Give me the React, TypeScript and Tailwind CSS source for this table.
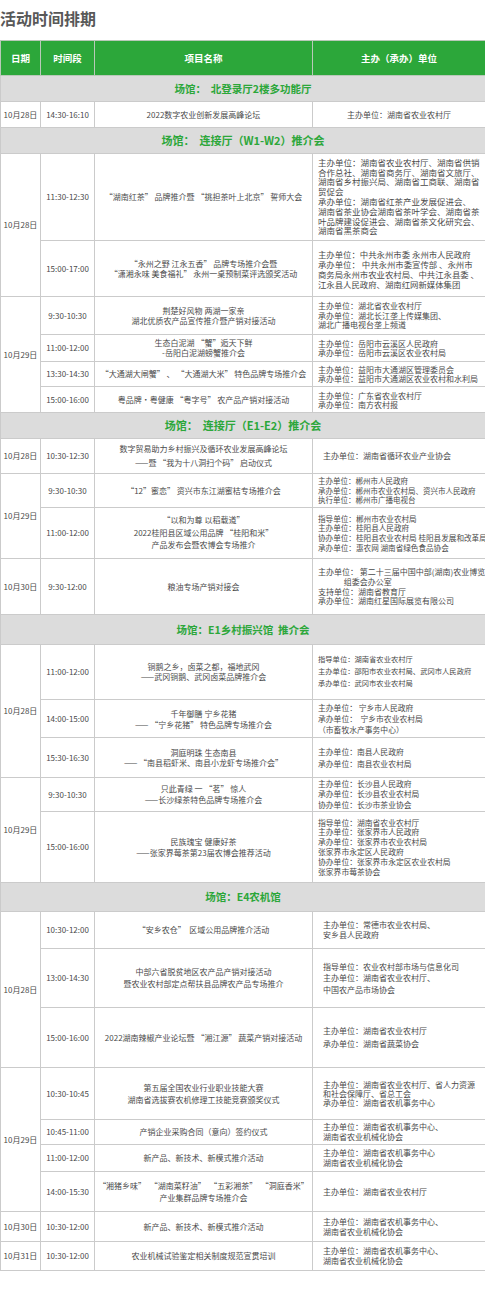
import React from "react";

type Row = {
  time: string;
  proj: string[];
  org: string[];
  h: string;
  pl?: string;
  ol?: string;
  of?: string;
  op?: string;
  center?: boolean;
};
type Group = { date: string; rows: Row[] };
type Section = { venue: string; vh: string; vf?: string; groups: Group[] };

const SECTIONS: Section[] = [
  {
    venue: "场馆：  北登录厅2楼多功能厅",
    vh: "h-[26px]",
    groups: [
      {
        date: "10月28日",
        rows: [
          {
            time: "14:30-16:10",
            proj: ["2022数字农业创新发展高峰论坛"],
            org: ["主办单位：湖南省农业农村厅"],
            h: "h-[26px]",
            center: true,
          },
        ],
      },
    ],
  },
  {
    venue: "场馆：  连接厅（W1-W2）推介会",
    vh: "h-[26px]",
    vf: "text-[11px]",
    groups: [
      {
        date: "10月28日",
        rows: [
          {
            time: "11:30-12:30",
            proj: ["“湖南红茶” 品牌推介暨 “挑担茶叶上北京” 誓师大会"],
            org: [
              "主办单位：湖南省农业农村厅、湖南省供销",
              "合作总社、湖南省商务厅、湖南省文旅厅、",
              "湖南省乡村振兴局、湖南省工商联、湖南省",
              "贸促会",
              "承办单位：湖南省红茶产业发展促进会、",
              "湖南省茶业协会湖南省茶叶学会、湖南省茶",
              "叶品牌建设促进会、湖南省茶文化研究会、",
              "湖南省黑茶商会",
            ],
            h: "h-[87px]",
            of: "text-[8.5px]",
            ol: "leading-[9.8px]",
          },
          {
            time: "15:00-17:00",
            proj: [
              "“永州之野 江永五香” 品牌专场推介会暨",
              "“潇湘永味 美食福礼” 永州一桌预制菜评选颁奖活动",
            ],
            org: [
              "主办单位：中共永州市委 永州市人民政府",
              "承办单位： 中共永州市委宣传部 、永州市",
              "商务局永州市农业农村局、中共江永县委 、",
              "江永县人民政府、湖南红网新媒体集团",
            ],
            h: "h-[56px]",
            of: "text-[8.4px]",
          },
        ],
      },
      {
        date: "10月29日",
        rows: [
          {
            time: "9:30-10:30",
            proj: ["荆楚好风物 两湖一家亲", "湖北优质农产品宣传推介暨产销对接活动"],
            org: [
              "主办单位：湖北省农业农村厅",
              "承办单位：湖北长江垄上传媒集团、",
              "湖北广播电视台垄上频道",
            ],
            h: "h-[38px]",
            ol: "leading-[9.5px]",
          },
          {
            time: "11:00-12:00",
            proj: ["生态白泥湖 “蟹”逅天下鲜", "-岳阳白泥湖螃蟹推介会"],
            org: ["主办单位：岳阳市云溪区人民政府", "承办单位：岳阳市云溪区农业农村局"],
            h: "h-[27px]",
            ol: "leading-[9px]",
          },
          {
            time: "13:30-14:30",
            proj: ["“大通湖大闸蟹” 、 “大通湖大米” 特色品牌专场推介会"],
            org: [
              "主办单位：益阳市大通湖区管理委员会",
              "承办单位：益阳市大通湖区农业农村和水利局",
            ],
            h: "h-[25px]",
            ol: "leading-[9px]",
          },
          {
            time: "15:00-16:00",
            proj: ["粤品牌·粤健康 “粤字号” 农产品产销对接活动"],
            org: ["主办单位：广东省农业农村厅", "承办单位：南方农村报"],
            h: "h-[26px]",
            ol: "leading-[9px]",
          },
        ],
      },
    ],
  },
  {
    venue: "场馆：  连接厅（E1-E2）推介会",
    vh: "h-[26px]",
    vf: "text-[11px]",
    groups: [
      {
        date: "10月28日",
        rows: [
          {
            time: "10:30-12:30",
            proj: [
              "数字贸易助力乡村振兴及循环农业发展高峰论坛",
              "——暨 “我为十八洞扫个码” 启动仪式",
            ],
            org: ["主办单位：湖南省循环农业产业协会"],
            h: "h-[35px]",
            pl: "leading-[14px]",
            op: "pl-[10px]",
          },
        ],
      },
      {
        date: "10月29日",
        rows: [
          {
            time: "9:30-10:30",
            proj: ["“12”蜜恋” 资兴市东江湖蜜桔专场推介会"],
            org: [
              "主办单位：郴州市人民政府",
              "承办单位：郴州市农业农村局、资兴市人民政府",
              "执行单位：郴州市广播电视台",
            ],
            h: "h-[34px]",
            of: "text-[7.5px]",
            ol: "leading-[9.5px]",
          },
          {
            time: "11:00-12:00",
            proj: [
              "“以和为尊 以稻载道”",
              "2022桂阳县区域公用品牌 “桂阳和米”",
              "产品发布会暨农博会专场推介",
            ],
            org: [
              "指导单位：郴州市农业农村局",
              "主办单位：桂阳县人民政府",
              "协办单位：桂阳县农业农村局 桂阳县发展和改革局",
              "承办单位：惠农网 湖南省绿色食品协会",
            ],
            h: "h-[51px]",
            pl: "leading-[12.5px]",
            of: "text-[7.6px]",
            ol: "leading-[9.7px]",
          },
        ],
      },
      {
        date: "10月30日",
        rows: [
          {
            time: "9:30-12:00",
            proj: ["粮油专场产销对接会"],
            org: [
              "主办单位： 第二十三届中国中部(湖南)农业博览",
              "\u3000\u3000\u3000\u00a0组委会办公室",
              "支持单位：湖南省教育厅",
              "承办单位：湖南红星国际展览有限公司",
            ],
            h: "h-[56px]",
            ol: "leading-[9.8px]",
          },
        ],
      },
    ],
  },
  {
    venue: "场馆：E1乡村振兴馆  推介会",
    vh: "h-[30px]",
    groups: [
      {
        date: "10月28日",
        rows: [
          {
            time: "11:00-12:00",
            proj: ["铜鹅之乡，卤菜之都，福地武冈", "——武冈铜鹅、武冈卤菜品牌推介会"],
            org: [
              "指导单位：湖南省农业农村厅",
              "主办单位：邵阳市农业农村局、武冈市人民政府",
              "承办单位：武冈市农业农村局",
            ],
            h: "h-[55px]",
            of: "text-[7.3px]",
            ol: "leading-[11.7px]",
          },
          {
            time: "14:00-15:00",
            proj: ["千年御膳 宁乡花猪", "—— “宁乡花猪” 特色品牌专场推介会"],
            org: [
              "主办单位： 宁乡市人民政府",
              "承办单位：  宁乡市农业农村局",
              "（市畜牧水产事务中心）",
            ],
            h: "h-[38px]",
            pl: "leading-[11px]",
            of: "text-[7.8px]",
            ol: "leading-[11.3px]",
          },
          {
            time: "15:30-16:30",
            proj: ["洞庭明珠 生态南县", "—— “南县稻虾米、南县小龙虾专场推介会”"],
            org: ["主办单位：南县人民政府", "承办单位：南县农业农村局"],
            h: "h-[40px]",
            of: "text-[7.8px]",
            ol: "leading-[11.7px]",
          },
        ],
      },
      {
        date: "10月29日",
        rows: [
          {
            time: "9:30-10:30",
            proj: ["只此青绿 一 “茗” 惊人", "——长沙绿茶特色品牌专场推介会"],
            org: [
              "主办单位：长沙县人民政府",
              "承办单位：长沙县农业农村局",
              "协办单位：长沙市茶业协会",
            ],
            h: "h-[34px]",
            pl: "leading-[10.5px]",
            of: "text-[7.8px]",
            ol: "leading-[10.3px]",
          },
          {
            time: "15:00-16:00",
            proj: ["民族瑰宝 健康好茶", "——张家界莓茶第23届农博会推荐活动"],
            org: [
              "指导单位：湖南省农业农村厅",
              "主办单位：张家界市人民政府",
              "承办单位：张家界市农业农村局",
              "张家界市永定区人民政府",
              "协办单位：张家界市永定区农业农村局",
              "张家界市莓茶协会",
            ],
            h: "h-[71px]",
            pl: "leading-[11px]",
            of: "text-[7.8px]",
            ol: "leading-[9.8px]",
          },
        ],
      },
    ],
  },
  {
    venue: "场馆：E4农机馆",
    vh: "h-[29px]",
    groups: [
      {
        date: "10月28日",
        rows: [
          {
            time: "10:30-12:00",
            proj: ["“安乡农仓”  区域公用品牌推介活动"],
            org: ["主办单位：常德市农业农村局、", "安乡县人民政府"],
            h: "h-[37px]",
            ol: "leading-[10px]",
            op: "pl-[10px]",
          },
          {
            time: "13:00-14:30",
            proj: [
              "中部六省脱贫地区农产品产销对接活动",
              "暨农业农村部定点帮扶县品牌农产品专场推介",
            ],
            org: [
              "指导单位：农业农村部市场与信息化司",
              "主办单位：湖南省农业农村厅、",
              "中国农产品市场协会",
            ],
            h: "h-[59px]",
            pl: "leading-[11.7px]",
            ol: "leading-[11.5px]",
            op: "pl-[10px]",
          },
          {
            time: "15:00-16:00",
            proj: ["2022湖南辣椒产业论坛暨 “湘江源” 蔬菜产销对接活动"],
            org: ["主办单位：湖南省农业农村厅", "承办单位：湖南省蔬菜协会"],
            h: "h-[60px]",
            ol: "leading-[12.7px]",
            op: "pl-[10px]",
          },
        ],
      },
      {
        date: "10月29日",
        rows: [
          {
            time: "10:30-10:45",
            proj: ["第五届全国农业行业职业技能大赛", "湖南省选拔赛农机修理工技能竞赛颁奖仪式"],
            org: [
              "主办单位：湖南省农业农村厅、省人力资源",
              "和社会保障厅、省总工会",
              "承办单位：湖南省农机事务中心",
            ],
            h: "h-[52px]",
            pl: "leading-[12px]",
            ol: "leading-[9.2px]",
            op: "pl-[10px]",
          },
          {
            time: "10:45-11:00",
            proj: ["产销企业采购合同（意向）签约仪式"],
            org: ["主办单位：湖南省农机事务中心、", "湖南省农业机械化协会"],
            h: "h-[25px]",
            ol: "leading-[9.7px]",
            op: "pl-[10px]",
          },
          {
            time: "11:00-12:00",
            proj: ["新产品、新技术、新模式推介活动"],
            org: ["主办单位：湖南省农机事务中心", "湖南省农业机械化协会"],
            h: "h-[27px]",
            ol: "leading-[9.7px]",
            op: "pl-[10px]",
          },
          {
            time: "14:00-15:30",
            proj: ["“湘猪乡味”  “湖南菜籽油”  “五彩湘茶”  “洞庭香米”", "产业集群品牌专场推介会"],
            org: ["主办单位：湖南省农业农村厅"],
            h: "h-[40px]",
            pl: "leading-[11.7px]",
            op: "pl-[10px]",
          },
        ],
      },
      {
        date: "10月30日",
        rows: [
          {
            time: "10:30-12:00",
            proj: ["新产品、新技术、新模式推介活动"],
            org: ["主办单位：湖南省农机事务中心、", "湖南省农业机械化协会"],
            h: "h-[30px]",
            ol: "leading-[9.7px]",
            op: "pl-[10px]",
          },
        ],
      },
      {
        date: "10月31日",
        rows: [
          {
            time: "10:30-12:00",
            proj: ["农业机械试验鉴定相关制度规范宣贯培训"],
            org: ["主办单位：湖南省农机事务中心、", "湖南省农业机械化协会"],
            h: "h-[29px]",
            ol: "leading-[9.7px]",
            op: "pl-[10px]",
          },
        ],
      },
    ],
  },
];

const cell = "border border-[#cbcbcb] align-middle p-0 overflow-hidden";

export default function App() {
  return (
    <div
      className="w-[485px] bg-white text-[#4a4a4a]"
      style={{ fontFamily: '"Noto Sans CJK SC", "Noto Sans", sans-serif' }}
    >
      <div className="h-[40px] pt-[8px] text-[16px] leading-[20px] font-bold text-[#585858]">
        活动时间排期
      </div>
      <table className="w-[485px] table-fixed border-collapse">
        <colgroup>
          <col className="w-[40px]" />
          <col className="w-[54px]" />
          <col className="w-[218px]" />
          <col className="w-[173px]" />
        </colgroup>
        <thead>
          <tr className="h-[35px] bg-[#2ca73a] text-[9.5px] font-bold text-white">
            <th className="border border-[#b9c9b9] font-bold">日期</th>
            <th className="border border-[#b9c9b9] font-bold">时间段</th>
            <th className="border border-[#b9c9b9] font-bold">项目名称</th>
            <th className="border border-[#b9c9b9] font-bold">主办（承办）单位</th>
          </tr>
        </thead>
        <tbody>
          {SECTIONS.map((s, si) => (
            <React.Fragment key={si}>
              <tr className={`${s.vh} bg-[#dcdcdc]`}>
                <td
                  colSpan={4}
                  className={`${cell} whitespace-pre text-center font-bold text-[#2ca73a] ${s.vf ?? "text-[10.5px]"}`}
                >
                  {s.venue}
                </td>
              </tr>
              {s.groups.map((g, gi) =>
                g.rows.map((r, ri) => (
                  <tr key={`${gi}-${ri}`} className={r.h}>
                    {ri === 0 && (
                      <td rowSpan={g.rows.length} className={`${cell} text-center text-[8px]`}>
                        {g.date}
                      </td>
                    )}
                    <td className={`${cell} text-center text-[8px]`}>{r.time}</td>
                    <td className={`${cell} text-center text-[8px] ${r.pl ?? "leading-[10px]"}`}>
                      {r.proj.map((p, pi) => (
                        <div key={pi} className="whitespace-pre">
                          {p}
                        </div>
                      ))}
                    </td>
                    <td
                      className={`${cell} ${r.center ? "text-center" : `text-left ${r.op ?? "pl-[5px]"}`} ${r.of ?? "text-[8px]"} ${r.ol ?? "leading-[10px]"}`}
                    >
                      {r.org.map((o, oi) => (
                        <div key={oi} className="whitespace-pre">
                          {o}
                        </div>
                      ))}
                    </td>
                  </tr>
                ))
              )}
            </React.Fragment>
          ))}
        </tbody>
      </table>
    </div>
  );
}
